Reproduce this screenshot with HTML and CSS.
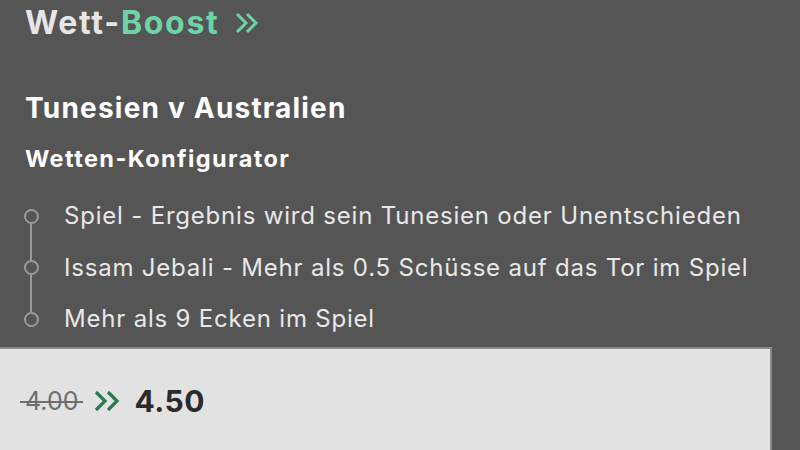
FILE: index.html
```html
<!DOCTYPE html>
<html lang="de">
<head>
<meta charset="utf-8">
<link rel="stylesheet" href="styles.css">
</head>
<body>
<div class="page">
  <div class="content">
    <h1 class="title">Wett-<span class="accent">Boost</span>
      <svg class="title-chev" width="26" height="22" viewBox="0 0 26 22"><path d="M3 2 L12 11 L3 20 M13 2 L22 11 L13 20" fill="none" stroke="#6ed3a7" stroke-width="3"/></svg>
    </h1>
    <h2 class="match">Tunesien v Australien</h2>
    <h3 class="config">Wetten-Konfigurator</h3>
    <ul class="legs">
      <li class="leg"><span class="dot"></span>Spiel - Ergebnis wird sein Tunesien oder Unentschieden</li>
      <li class="leg"><span class="dot"></span>Issam Jebali - Mehr als 0.5 Schüsse auf das Tor im Spiel</li>
      <li class="leg"><span class="dot"></span>Mehr als 9 Ecken im Spiel</li>
    </ul>
  </div>
  <div class="odds-panel">
    <span class="old">4.00</span>
    <svg class="odds-chev" width="27" height="22" viewBox="0 0 27 22"><path d="M3 2 L12 11 L3 20 M15 2 L24 11 L15 20" fill="none" stroke="#2a7a50" stroke-width="3.2"/></svg>
    <span class="new">4.50</span>
  </div>
</div>
</body>
</html>
```
FILE: styles.css
```css
html, body {
  margin: 0;
  padding: 0;
  background: #555555;
  width: 800px;
  height: 450px;
  overflow: hidden;
  font-family: Inter, "Noto Sans", sans-serif;
}
.page {
  display: flex;
  flex-direction: column;
  height: 450px;
}
.content {
  padding: 0 0 0 25px;
  height: 347px;
  box-sizing: border-box;
}
.title {
  margin: 0;
  padding-top: 4px;
  font-size: 32px;
  font-weight: 700;
  letter-spacing: 1.7px;
  color: #e6e6e6;
  line-height: 38px;
  display: flex;
  align-items: center;
}
.accent { color: #6ed3a7; }
.title-chev { margin-left: 15px; }
.match {
  margin: 49px 0 0;
  font-size: 28px;
  font-weight: 700;
  letter-spacing: 1.2px;
  color: #ffffff;
  line-height: 34px;
}
.config {
  margin: 19px 0 0;
  font-size: 23.5px;
  font-weight: 700;
  letter-spacing: 1.4px;
  color: #ffffff;
  line-height: 30px;
}
.legs {
  list-style: none;
  margin: 16px 0 0;
  padding: 0;
}
.leg {
  position: relative;
  display: flex;
  align-items: center;
  height: 51.5px;
  font-size: 24px;
  letter-spacing: 0.8px;
  color: #e8e8e8;
  padding-left: 39px;
}
.dot {
  position: absolute;
  left: -1px;
  top: 18.5px;
  width: 11px;
  height: 11px;
  border: 2px solid #9a9a9a;
  border-radius: 50%;
}
.leg::after {
  content: "";
  position: absolute;
  left: 5px;
  top: 33px;
  width: 2px;
  height: 37px;
  background: #9a9a9a;
}
.leg:last-child::after { display: none; }
.odds-panel {
  width: 772px;
  flex: 1;
  background: #e2e2e2;
  border-top: 2px solid #8a8a8a;
  border-right: 2px solid #8a8a8a;
  box-sizing: border-box;
  display: flex;
  align-items: center;
  padding-left: 25px;
  padding-top: 2px;
}
.old {
  position: relative;
  font-size: 25px;
  color: #6e6e6e;
}
.old::after {
  content: "";
  position: absolute;
  left: -5px;
  right: -5px;
  top: 53%;
  height: 2px;
  background: #6e6e6e;
}
.odds-chev { margin-left: 15px; }
.new {
  margin-left: 14px;
  font-size: 30px;
  font-weight: 700;
  letter-spacing: 0.5px;
  color: #2b2b2b;
}
```
